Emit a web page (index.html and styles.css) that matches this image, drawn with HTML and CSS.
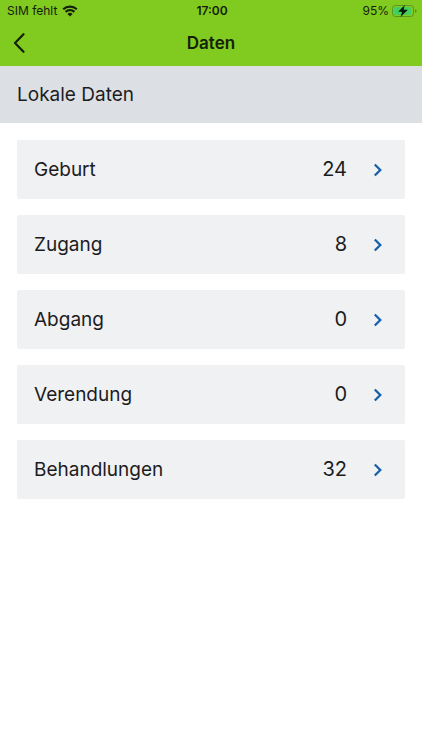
FILE: index.html
```html
<!DOCTYPE html>
<html lang="de">
<head>
<meta charset="utf-8">
<meta name="viewport" content="width=device-width, initial-scale=1">
<title>Daten</title>
<link rel="stylesheet" href="styles.css">
</head>
<body>
<header class="top">
  <div class="status">
    <div class="status-left">
      <span>SIM fehlt</span>
      <svg class="wifi" viewBox="0 0 16 12" aria-hidden="true">
        <path d="M1.2 4.300a9.800 9.800 0 0 1 13.600 0M3.600 6.900a6.300 6.300 0 0 1 8.800 0" fill="none" stroke="currentColor" stroke-width="2.200"/>
        <path d="M5.400 8.900a3.800 3.800 0 0 1 5.200 0L8 11.600z" fill="currentColor"/>
      </svg>
    </div>
    <time class="clock">17:00</time>
    <div class="status-right">
      <span>95%</span>
      <svg class="battery" viewBox="0 0 25 12" aria-hidden="true">
        <rect x=".5" y=".5" width="21" height="11" rx="3" fill="none" stroke="#5b9420"/>
        <rect x="2" y="2" width="17" height="8" rx="1.500" fill="#43cf60"/>
        <path d="M23.200 4.200v3.600q1.300-.5 1.300-1.800t-1.300-1.800z" fill="#4b7d18"/>
        <path d="M12.800 0L6.200 6.800h3.900L8.500 12l7.400-7.200h-4.300z" fill="#0c1705"/>
      </svg>
    </div>
  </div>
  <nav class="bar">
    <button class="back" type="button" aria-label="Zurück">
      <svg viewBox="0 0 12 20" aria-hidden="true"><path d="M10.500 1.200L2 10l8.500 8.800" fill="none" stroke="currentColor" stroke-width="2.200" stroke-linecap="round" stroke-linejoin="round"/></svg>
    </button>
    <h1 class="title">Daten</h1>
  </nav>
</header>
<main>
  <h2 class="section">Lokale Daten</h2>
  <ul class="list">
    <li><a class="card" href="#geburt"><span>Geburt</span><span class="count">24</span><svg class="chevron" viewBox="0 0 10 14" aria-hidden="true"><path d="M1.800 1.500L7.300 7l-5.500 5.500"/></svg></a></li>
    <li><a class="card" href="#zugang"><span>Zugang</span><span class="count">8</span><svg class="chevron" viewBox="0 0 10 14" aria-hidden="true"><path d="M1.800 1.500L7.300 7l-5.500 5.500"/></svg></a></li>
    <li><a class="card" href="#abgang"><span>Abgang</span><span class="count">0</span><svg class="chevron" viewBox="0 0 10 14" aria-hidden="true"><path d="M1.800 1.500L7.300 7l-5.500 5.500"/></svg></a></li>
    <li><a class="card" href="#verendung"><span>Verendung</span><span class="count">0</span><svg class="chevron" viewBox="0 0 10 14" aria-hidden="true"><path d="M1.800 1.500L7.300 7l-5.500 5.500"/></svg></a></li>
    <li><a class="card" href="#behandlungen"><span>Behandlungen</span><span class="count">32</span><svg class="chevron" viewBox="0 0 10 14" aria-hidden="true"><path d="M1.800 1.500L7.300 7l-5.500 5.500"/></svg></a></li>
  </ul>
</main>
</body>
</html>
```
FILE: styles.css
```css
* {
  box-sizing: border-box;
}

body {
  margin: 0;
  background: #fff;
  color: #1c1c1e;
  font-family: Inter, "Liberation Sans", sans-serif;
}

.top {
  background: #81ca1f;
  color: #14210a;
}

.status {
  display: grid;
  grid-template-columns: 1fr auto 1fr;
  align-items: center;
  padding: 0 5px 0 7px;
  font-size: 12px;
  line-height: 22px;
}

.status-left,
.status-right {
  display: flex;
  align-items: center;
  gap: 5px;
}

.status-right {
  justify-content: flex-end;
  gap: 3px;
}

.wifi {
  width: 16px;
  height: 12px;
}

.battery {
  width: 25px;
  height: 12px;
}

.clock {
  font-weight: 600;
}

.bar {
  display: grid;
  grid-template-columns: 1fr auto 1fr;
  align-items: center;
  height: 44px;
  padding: 0 13px 2px;
}

.back {
  display: flex;
  justify-self: start;
  padding: 0;
  border: 0;
  background: none;
  color: inherit;
}

.back svg {
  width: 12px;
  height: 20px;
}

.title {
  margin: 0;
  font-size: 17px;
  font-weight: 600;
  line-height: 24px;
}

.section {
  margin: 0;
  padding: 16px 17px;
  background: #dce0e5;
  font-size: 19px;
  font-weight: 400;
  line-height: 25px;
}

.list {
  display: grid;
  gap: 16px;
  margin: 0;
  padding: 17px;
  list-style: none;
}

.card {
  display: flex;
  align-items: center;
  padding: 17px 22px 17px 17px;
  border-radius: 2px;
  background: #f0f1f3;
  color: inherit;
  font-size: 19px;
  line-height: 25px;
  text-decoration: none;
}

.count {
  margin-left: auto;
  font-size: 20px;
}

.chevron {
  width: 10px;
  height: 14px;
  margin-left: 26px;
  fill: none;
  stroke: #1760ac;
  stroke-width: 2.3;
}
```
